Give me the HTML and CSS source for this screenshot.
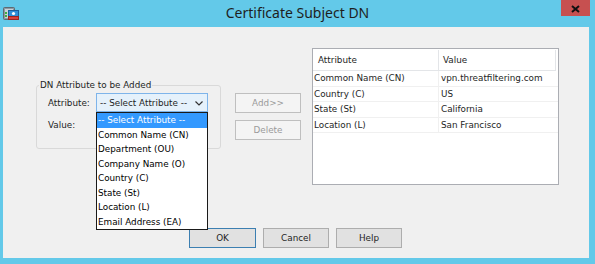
FILE: index.html
```html
<!DOCTYPE HTML>
<html>
<head>
  <meta charset="UTF-8">
  <title>Certificate Subject DN</title>
  <link rel="stylesheet" href="styles.css">
</head>
<body>
  <div class="window">
    <div class="titlebar">
      <div class="app-icon">
        <svg width="16" height="13" viewBox="0 0 16 13">
          <rect x="0.5" y="0.5" width="11" height="12" rx="1" fill="#8c9aa3" stroke="#5d6a72"/>
          <rect x="2" y="2" width="8" height="9" fill="#c8d2d8"/>
          <rect x="2" y="5" width="2" height="2" fill="#3fae3f"/>
          <rect x="2" y="8" width="2" height="2" fill="#3fae3f"/>
          <rect x="5.5" y="3.5" width="10" height="6" fill="#2f8fd8" stroke="#1b5f9a"/>
          <circle cx="10.5" cy="6.5" r="1.6" fill="#ffffff"/>
          <rect x="5.5" y="9.5" width="10" height="3" fill="#d8403a" stroke="#9a2420"/>
        </svg>
      </div>
      <div class="title">Certificate Subject DN</div>
      <div class="title-right">
        <div class="close-btn">
          <svg width="9" height="8" viewBox="0 0 9 8">
            <path d="M1 1 L8 7 M8 1 L1 7" stroke="#111" stroke-width="2"/>
          </svg>
        </div>
      </div>
    </div>

    <div class="client">
      <div class="main">
        <div class="group">
          <div class="group-title">DN Attribute to be Added</div>
          <div class="field">
            <span class="field-label">Attribute:</span>
            <div class="combo-wrap">
              <div class="combo">
                <span>-- Select Attribute --</span>
                <svg width="8" height="5" viewBox="0 0 8 5">
                  <path d="M0.5 0.5 L4 4 L7.5 0.5" fill="none" stroke="#333" stroke-width="1.2"/>
                </svg>
              </div>
              <ul class="dropdown">
                <li class="selected">-- Select Attribute --</li>
                <li>Common Name (CN)</li>
                <li>Department (OU)</li>
                <li>Company Name (O)</li>
                <li>Country (C)</li>
                <li>State (St)</li>
                <li>Location (L)</li>
                <li>Email Address (EA)</li>
              </ul>
            </div>
          </div>
          <div class="field value-row">
            <span class="field-label">Value:</span>
            <input type="text" class="value-input">
          </div>
        </div>

        <div class="side">
          <button class="btn" disabled>Add&gt;&gt;</button>
          <button class="btn" disabled>Delete</button>
        </div>

        <div class="grid">
          <div class="grid-head">
            <div class="hcell col1">Attribute</div>
            <div class="hcell col2">Value</div>
          </div>
          <div class="grid-row">
            <div class="cell col1">Common Name (CN)</div>
            <div class="cell col2">vpn.threatfiltering.com</div>
          </div>
          <div class="grid-row">
            <div class="cell col1">Country (C)</div>
            <div class="cell col2">US</div>
          </div>
          <div class="grid-row">
            <div class="cell col1">State (St)</div>
            <div class="cell col2">California</div>
          </div>
          <div class="grid-row">
            <div class="cell col1">Location (L)</div>
            <div class="cell col2">San Francisco</div>
          </div>
        </div>
      </div>

      <div class="footer">
        <button class="btn btn-default">OK</button>
        <button class="btn">Cancel</button>
        <button class="btn">Help</button>
      </div>
    </div>
  </div>
</body>
</html>
```

FILE: styles.css
```css
body {
  margin: 0;
  padding: 0;
  font-family: 'DejaVu Sans', Verdana, sans-serif;
  font-size: 8.8px;
  color: #000000;
}
.window {
  width: 595px;
  height: 264px;
  background-color: #63c9e9;
  display: flex;
  flex-direction: column;
}
.titlebar {
  height: 27px;
  display: grid;
  grid-template-columns: 1fr auto 1fr;
  align-items: start;
}
.app-icon {
  padding: 7px 0 0 3px;
  line-height: 0;
}
.title {
  font-family: 'Noto Sans', 'Open Sans', sans-serif;
  font-size: 14px;
  line-height: 20px;
  padding-top: 3px;
  color: #1e1e1e;
}
.title-right {
  display: flex;
  justify-content: flex-end;
}
.close-btn {
  width: 29px;
  height: 16px;
  margin-right: 5px;
  background-color: #c75050;
  display: flex;
  align-items: center;
  justify-content: center;
  padding-top: 2px;
  box-sizing: border-box;
}
.client {
  flex: 1;
  margin: 0 6px 6px 3px;
  background-color: #f0f0f0;
  display: flex;
  flex-direction: column;
}
.main {
  display: flex;
  align-items: flex-start;
  padding: 21px 0 0 33px;
}
.group {
  margin-top: 37px;
  width: 185px;
  border: 1px solid #d9d9d9;
  border-radius: 3px;
  padding-bottom: 14px;
  box-sizing: border-box;
}
.group-title {
  width: max-content;
  margin: -7px 0 0 2px;
  padding: 0 1px;
  line-height: 13px;
  background-color: #f0f0f0;
  color: #1e1e1e;
}
.field {
  display: flex;
  align-items: center;
  height: 19px;
  padding-left: 11px;
  margin-top: 1px;
}
.value-row {
  margin-top: 3px;
}
.field-label {
  width: 48px;
  color: #1e1e1e;
}
.combo-wrap {
  position: relative;
}
.combo {
  width: 112px;
  height: 19px;
  box-sizing: border-box;
  background-color: #e5f1fb;
  border: 1px solid #7eb4ea;
  display: flex;
  align-items: center;
  justify-content: space-between;
  padding: 0 4px 0 3px;
  color: #1e1e1e;
}
.combo svg {
  margin-top: 2px;
}
.dropdown {
  position: absolute;
  top: 100%;
  left: 0;
  width: 112px;
  box-sizing: border-box;
  margin: 0;
  padding: 0;
  list-style: none;
  background-color: #ffffff;
  border: 1px solid #1a1a1a;
  z-index: 5;
}
.dropdown li {
  height: 14.5px;
  line-height: 14.5px;
  padding-left: 1px;
  white-space: nowrap;
}
.dropdown li.selected {
  background-color: #3399ff;
  color: #ffffff;
}
.value-input {
  width: 112px;
  height: 19px;
  box-sizing: border-box;
  border: 1px solid #abadb3;
  margin: 0;
}
.side {
  margin: 45px 0 0 14px;
  display: flex;
  flex-direction: column;
  gap: 7px;
}
.btn {
  width: 66px;
  height: 20px;
  box-sizing: border-box;
  background-color: #e1e1e1;
  border: 1px solid #adadad;
  font-family: 'DejaVu Sans', Verdana, sans-serif;
  font-size: 8.8px;
  color: #1e1e1e;
  padding: 0;
  margin: 0;
}
.btn:disabled {
  background-color: #f4f4f4;
  border-color: #bfbfbf;
  color: #9a9a9a;
}
.btn-default {
  width: 67px;
  border-color: #3c7fb1;
}
.grid {
  margin-left: 11px;
  width: 247px;
  height: 137px;
  box-sizing: border-box;
  background-color: #ffffff;
  border: 1px solid #abadb3;
}
.grid-head {
  display: flex;
  height: 22px;
  padding-top: 1px;
  box-sizing: border-box;
}
.hcell {
  line-height: 20px;
  border-right: 1px solid #e3e5e8;
  border-bottom: 1px solid #e3e5e8;
  background-color: #ffffff;
  color: #1e1e1e;
}
.hcell.col1 {
  width: 126px;
  padding-left: 5px;
  box-sizing: border-box;
}
.hcell.col2 {
  width: 117px;
  padding-left: 4px;
  box-sizing: border-box;
}
.grid-row {
  display: flex;
  height: 15.5px;
  border-bottom: 1px solid #f0f0f0;
  box-sizing: border-box;
}
.cell {
  line-height: 15px;
  white-space: nowrap;
  color: #1e1e1e;
}
.cell.col1 {
  width: 126px;
  padding-left: 1px;
  border-right: 1px solid #f0f0f0;
  box-sizing: border-box;
}
.cell.col2 {
  padding-left: 2px;
}
.footer {
  display: flex;
  gap: 7px;
  margin-top: 43px;
  padding-left: 186px;
}
```
